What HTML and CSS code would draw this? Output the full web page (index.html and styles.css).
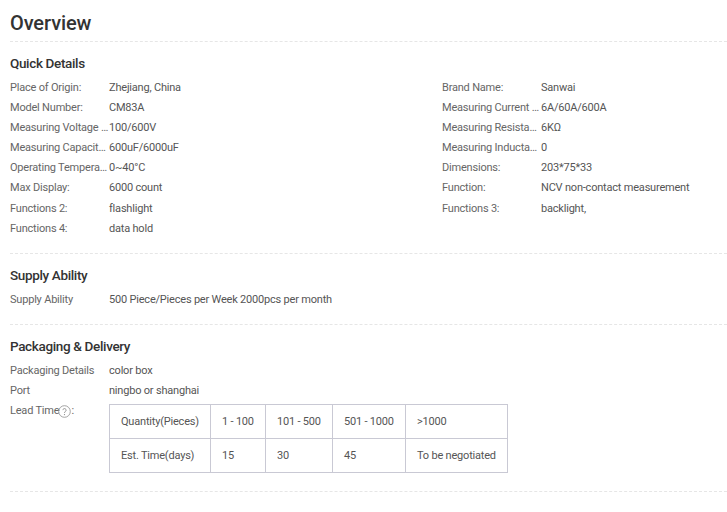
FILE: index.html
```html
<!DOCTYPE html>
<html lang="en">
<head>
<meta charset="utf-8">
<title>Overview</title>
<link rel="stylesheet" href="styles.css">
</head>
<body>
<main class="overview">
  <h1 class="title">Overview</h1>

  <section class="block block-quick">
    <h2 class="heading">Quick Details</h2>
    <div class="details">
      <div class="col">
        <div class="row"><span class="label">Place of Origin:</span><span class="value">Zhejiang, China</span></div>
        <div class="row"><span class="label">Model Number:</span><span class="value">CM83A</span></div>
        <div class="row"><span class="label">Measuring Voltage Range:</span><span class="value">100/600V</span></div>
        <div class="row"><span class="label">Measuring Capacitance:</span><span class="value">600uF/6000uF</span></div>
        <div class="row"><span class="label">Operating Temperature:</span><span class="value">0~40°C</span></div>
        <div class="row"><span class="label">Max Display:</span><span class="value">6000 count</span></div>
        <div class="row row-tall"><span class="label">Functions 2:</span><span class="value">flashlight</span></div>
        <div class="row"><span class="label">Functions 4:</span><span class="value">data hold</span></div>
      </div>
      <div class="col">
        <div class="row"><span class="label">Brand Name:</span><span class="value">Sanwai</span></div>
        <div class="row"><span class="label">Measuring Current Range:</span><span class="value">6A/60A/600A</span></div>
        <div class="row"><span class="label">Measuring Resistance:</span><span class="value">6KΩ</span></div>
        <div class="row"><span class="label">Measuring Inductance:</span><span class="value">0</span></div>
        <div class="row"><span class="label">Dimensions:</span><span class="value">203*75*33</span></div>
        <div class="row"><span class="label">Function:</span><span class="value">NCV non-contact measurement</span></div>
        <div class="row row-tall"><span class="label">Functions 3:</span><span class="value">backlight,</span></div>
      </div>
    </div>
  </section>

  <section class="block block-supply">
    <h2 class="heading">Supply Ability</h2>
    <div class="row"><span class="label">Supply Ability</span><span class="value">500 Piece/Pieces per Week 2000pcs per month</span></div>
  </section>

  <section class="block block-packaging">
    <h2 class="heading">Packaging &amp; Delivery</h2>
    <div class="row"><span class="label">Packaging Details</span><span class="value">color box</span></div>
    <div class="row"><span class="label">Port</span><span class="value">ningbo or shanghai</span></div>
    <div class="lead">
      <span class="lead-label">Lead Time<svg class="help" width="13" height="13" viewBox="0 0 13 13" aria-hidden="true"><circle cx="6.5" cy="6.5" r="5.8" fill="none" stroke="#999" stroke-width="0.9"/><path d="M4.9 5.1a1.6 1.6 0 1 1 2.5 1.4c-.6.4-.9.7-.9 1.4" fill="none" stroke="#888" stroke-width="0.9"/><circle cx="6.5" cy="9.6" r="0.6" fill="#888"/></svg>:</span>
      <table class="lead-table">
        <tr><td class="c1">Quantity(Pieces)</td><td class="c2">1 - 100</td><td class="c3">101 - 500</td><td class="c4">501 - 1000</td><td class="c5">&gt;1000</td></tr>
        <tr><td>Est. Time(days)</td><td>15</td><td>30</td><td>45</td><td>To be negotiated</td></tr>
      </table>
    </div>
  </section>
</main>
</body>
</html>
```
FILE: styles.css
```css
* { box-sizing: border-box; }
html, body { margin: 0; padding: 0; background: #fff; }
body {
  font-family: Roboto, "Liberation Sans", sans-serif;
  font-size: 11px;
  letter-spacing: -0.2px;
  color: #555;
  overflow: hidden;
  width: 727px;
  height: 512px;
}
.overview { padding: 0 0 0 10px; }
.title {
  margin: 0;
  height: 42px;
  padding-top: 11px;
  font-size: 20px;
  line-height: 24px;
  font-weight: 500;
  letter-spacing: -0.1px;
  color: #333;
  border-bottom: 1px dashed #e6e6e6;
}
.block { border-bottom: 1px dashed #e6e6e6; }
.block-quick { height: 212px; }
.block-supply { height: 71px; }
.block-packaging { height: 167px; }
.heading {
  margin: 0;
  padding-top: 13px;
  height: 36px;
  font-size: 13.5px;
  line-height: 17px;
  font-weight: 500;
  letter-spacing: -0.35px;
  color: #333;
}
.details { display: grid; grid-template-columns: 432px 1fr; }
.col { min-width: 0; }
.row { display: flex; height: 20px; line-height: 20px; }
.row-tall { height: 21px; line-height: 22px; }
.label {
  width: 99px;
  flex: none;
  color: #666;
  white-space: nowrap;
  overflow: hidden;
  text-overflow: ellipsis;
}
.value { color: #555; white-space: nowrap; }
.lead { display: flex; align-items: flex-start; }
.lead-label { width: 99px; flex: none; line-height: 20px; color: #666; display: flex; align-items: center; height: 20px; }
.help { margin: 0 0 0 -1px; }
.lead-table {
  border-collapse: collapse;
  table-layout: fixed;
  width: 398px;
  margin-top: 3px;
  color: #555;
}
.lead-table td {
  border: 1px solid #c9c9d4;
  height: 34px;
  padding: 0 0 0 11px;
  white-space: nowrap;
}
.c1 { width: 101px; }
.c2 { width: 55px; }
.c3 { width: 67px; }
.c4 { width: 73px; }
.c5 { width: 102px; }
```
